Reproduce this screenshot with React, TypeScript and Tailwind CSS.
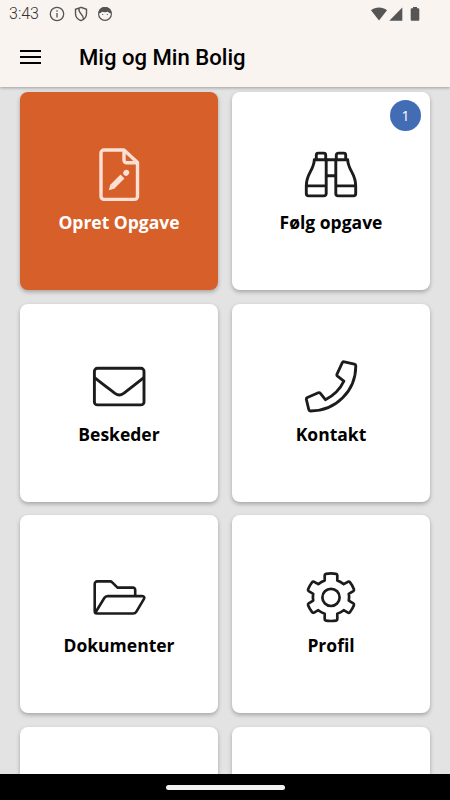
import type { ReactNode } from 'react';
import clsx from 'clsx';

interface TileProps {
  label?: string;
  icon?: ReactNode;
  badge?: number;
  active?: boolean;
}

const FileEditIcon = () => (
  <svg className="w-[54px] h-[54px]" viewBox="0 0 54 54" fill="none" stroke="currentColor" strokeWidth={3.4} strokeLinejoin="round">
    <path d="M32 2H12a3 3 0 0 0-3 3v43.4a3 3 0 0 0 3 3h30.500a3 3 0 0 0 3-3V14.600L32 2v10.300a2.500 2.500 0 0 0 2.500 2.500h11" />
    <path d="m30.500 28.500-10 10" strokeWidth={5.4} />
    <path d="m18.400 36.200-1.600 6 6-1.600z" fill="currentColor" stroke="none" />
    <path d="m34 25 .4-.4" strokeWidth={5.6} strokeLinecap="round" />
  </svg>
);

const BinocularsIcon = () => (
  <svg className="w-[54px] h-[54px]" viewBox="0 0 54 54" fill="none" stroke="currentColor" strokeWidth={2.9} strokeLinejoin="round">
    <path d="M12.300 11.400V7.100a2 2 0 0 1 2-2h5.400a2 2 0 0 1 2 2v4.300" />
    <path d="M22.200 11.700H10.300c-.3 10.500-8 13.500-8 26v7.900a2.300 2.300 0 0 0 2.300 2.300h15.300a2.300 2.300 0 0 0 2.300-2.300zM2.300 37.900h19.900" />
    <path d="M41.700 11.400V7.100a2 2 0 0 0-2-2h-5.400a2 2 0 0 0-2 2v4.300" />
    <path d="M31.800 11.700h11.900c.3 10.500 8 13.500 8 26v7.900a2.300 2.300 0 0 1-2.300 2.300H34.100a2.300 2.300 0 0 1-2.300-2.300zM51.700 37.900H31.800" />
    <path d="M22 11.700h10M22 27.700h10" />
  </svg>
);

const MailIcon = () => (
  <svg className="w-[54px] h-[54px]" viewBox="0 0 54 54" fill="none" stroke="currentColor" strokeWidth={2.9} strokeLinejoin="round">
    <rect x="2.400" y="8.300" width="49.600" height="36.600" rx="3" />
    <path d="M2.600 17.600c7.500 6 14.400 11.200 20 15.500 3.800 2.600 5.600 2.600 9.400 0 5.600-4.300 12.300-9.500 19.800-15.500" />
  </svg>
);

const PhoneIcon = () => (
  <svg className="w-[54px] h-[54px]" viewBox="0 0 54 54" fill="none" stroke="currentColor" strokeWidth={2.8} strokeLinejoin="round">
    <path d="M40.300 1.800 50.400 4.100a1.800 1.800 0 0 1 1.400 1.800C51.700 31 32 51 6.600 51a1.800 1.800 0 0 1-1.800-1.400L2.400 39.600a1.800 1.800 0 0 1 1-2.100l10.900-4.700a1.800 1.800 0 0 1 2.100.5l5 6.400a39.500 39.500 0 0 0 18.500-18.500l-6.400-5a1.800 1.800 0 0 1-.5-2.100l5.200-11.200a1.800 1.800 0 0 1 2.100-1.100z" />
  </svg>
);

const FolderIcon = () => (
  <svg className="w-[54px] h-[54px]" viewBox="0 0 54 54" fill="none" stroke="currentColor" strokeWidth={2.6} strokeLinejoin="round">
    <path d="M43.200 25v-6.200a2.200 2.200 0 0 0-2.200-2.200H25.500l-5.300-5.300a3 3 0 0 0-2.200-.9H5.200a2.500 2.500 0 0 0-2.500 2.500v27.400a2.200 2.200 0 0 0 2.200 2.200H41a4 4 0 0 0 3.400-1.900l7.300-12.200c1.200-2 .4-3.300-1.500-3.300H15.700a4 4 0 0 0-3.400 1.900L3.300 41.700" />
  </svg>
);

const GearIcon = () => (
  <svg className="w-[54px] h-[54px]" viewBox="0 0 54 54" fill="none" stroke="currentColor" strokeWidth={2.7} strokeLinejoin="round">
    <path d="M20.700 9.600V4.200q0-1.200 1.200-1.400 5.100-.8 10.200 0 1.200.2 1.200 1.400v5.400q3.300 1.200 6.400 3.600l4.200-2.400q1.200-.6 2 .4 2.700 3.500 4 7 .4 1.200-.6 1.900l-4.500 2.700q.7 3.400 0 6.800l4.500 2.700q1 .7.600 1.900-1.300 3.500-4 7-.8 1-2 .4l-4.200-2.400q-3.100 2.400-6.400 3.600v5.400q0 1.200-1.200 1.400-5.100.8-10.200 0-1.200-.2-1.200-1.400v-5.400q-3.300-1.200-6.400-3.600l-4.200 2.400q-1.200.6-2-.4-2.700-3.500-4-7-.4-1.200.6-1.900l4.500-2.700q-.7-3.400 0-6.800l-4.500-2.700q-1-.7-.6-1.900 1.300-3.500 4-7 .8-1 2-.4l4.200 2.400q3.100-2.400 6.400-3.600z" />
    <circle cx="27" cy="26.400" r="8.600" />
  </svg>
);

const tiles: TileProps[] = [
  { label: 'Opret Opgave', icon: <FileEditIcon />, active: true },
  { label: 'Følg opgave', icon: <BinocularsIcon />, badge: 1 },
  { label: 'Beskeder', icon: <MailIcon /> },
  { label: 'Kontakt', icon: <PhoneIcon /> },
  { label: 'Dokumenter', icon: <FolderIcon /> },
  { label: 'Profil', icon: <GearIcon /> },
  {},
  {},
];

function Tile({ label, icon, badge, active }: TileProps) {
  return (
    <button
      className={clsx(
        'relative h-[198px] rounded-lg flex flex-col items-center pt-14 shadow-[0_2px_4px_rgba(0,0,0,0.28)]',
        active ? 'bg-[#d75f2a] text-white' : 'bg-white text-black'
      )}
    >
      <span className={clsx('block h-[54px]', active ? 'text-[#fce0d5]' : 'text-[#1c1c1c]')}>
        {icon}
      </span>
      {label && (
        <span className="mt-1.5 text-[17.500px] leading-7 font-bold whitespace-nowrap">{label}</span>
      )}
      {badge && (
        <span className="absolute top-2 right-[9px] size-[31px] rounded-full bg-[#426db5] text-white text-sm flex items-center justify-center">
          {badge}
        </span>
      )}
    </button>
  );
}

function StatusBar() {
  return (
    <div className="h-[27px] flex items-center pl-[9px] pr-[30px] text-[#555]">
      <span className="w-[40px] text-base font-light leading-none text-[#333] font-['Roboto',sans-serif]">
        3:43
      </span>
      <svg className="w-4 h-4" viewBox="0 0 16 16" fill="none" stroke="currentColor" strokeWidth={1.3}>
        <circle cx="8" cy="8" r="6.700" />
        <path d="M8 7v4.500M8 4.300v1.500" />
      </svg>
      <svg className="w-4 h-4 ml-2" viewBox="0 0 16 16" fill="none" stroke="currentColor" strokeWidth={1.4}>
        <path d="M8 1.300 2.500 3.300v4.200c0 3.400 2.300 6 5.500 7.200 3.200-1.200 5.500-3.800 5.500-7.200V3.300z" />
        <path d="M6 2.200C4.800 8 11 7.600 10.500 13.300" />
      </svg>
      <svg className="w-4 h-4 ml-2" viewBox="0 0 16 16" fill="none" stroke="currentColor" strokeWidth={1.2}>
        <circle cx="8" cy="8" r="6.400" />
        <path d="M2 6.500c1.500.3 2.200-.3 2.700-1.500 2 .7 4.600.7 6.600 0 .5 1.200 1.200 1.800 2.700 1.500C13.500 3.500 11 1.500 8 1.500S2.500 3.500 2 6.500z" fill="currentColor" />
        <path d="M5.200 8.500h1M9.800 8.500h1" />
      </svg>
      <svg className="w-4 h-[14px] ml-auto" viewBox="0 0 16 14" fill="currentColor">
        <path d="M0 3.200C4.600-.5 11.400-.5 16 3.200L8 13.500z" />
      </svg>
      <svg className="w-[14px] h-[14px] ml-0.5" viewBox="0 0 14 14" fill="currentColor">
        <path d="M13.300.5v13.200H.3z" />
      </svg>
      <svg className="w-[10px] h-[14px] ml-[7px]" viewBox="0 0 10 14" fill="currentColor">
        <path d="M3 0h4v1.300h1.300q1 0 1 1v10.500q0 1-1 1H1.700q-1 0-1-1V2.300q0-1 1-1H3z" />
      </svg>
    </div>
  );
}

export default function App() {
  return (
    <div className="w-[450px] h-[800px] flex flex-col overflow-hidden bg-[#e3e3e3] font-['Open_Sans',sans-serif]">
      <header className="relative z-10 h-[87px] shrink-0 bg-[#f9f4f0] shadow-[0_1px_3px_rgba(0,0,0,0.3)]">
        <StatusBar />
        <div className="h-[60px] flex items-center pl-5">
          <button aria-label="Menu" className="w-[21px] flex flex-col gap-1">
            <span className="h-0.5 bg-black" />
            <span className="h-0.5 bg-black" />
            <span className="h-0.5 bg-black" />
          </button>
          <h1 className="ml-[38px] pt-px text-[22.100px] font-medium text-black font-['Roboto',sans-serif]">
            Mig og Min Bolig
          </h1>
        </div>
      </header>

      <main className="flex-1 min-h-0 overflow-hidden px-5 pt-[5px]">
        <div className="grid grid-cols-2 gap-x-3.5 gap-y-[13.600px]">
          {tiles.map((tile, index) => (
            <Tile key={index} {...tile} />
          ))}
        </div>
      </main>

      <footer className="h-[26px] shrink-0 bg-black flex items-center justify-center">
        <div className="w-[119px] h-[5px] rounded-full bg-[#f2f2f2]" />
      </footer>
    </div>
  );
}
